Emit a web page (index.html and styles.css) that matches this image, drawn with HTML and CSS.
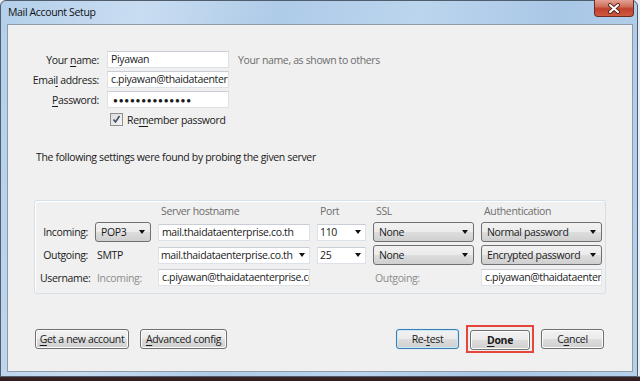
FILE: index.html
```html
<!DOCTYPE html>
<html>
  <head>
    <link rel="stylesheet" href="styles.css">
  </head>
  <body>
    <div class="window">
      <div class="titlebar">
        <span class="title">Mail Account Setup</span>
        <div class="close-btn">
          <svg width="14" height="11" viewBox="0 0 14 11">
            <path d="M3 2 L11 9 M11 2 L3 9" stroke="#5a2a22" stroke-width="4" stroke-linecap="round"/>
            <path d="M3 2 L11 9 M11 2 L3 9" stroke="#fff" stroke-width="2" stroke-linecap="round"/>
          </svg>
        </div>
      </div>

      <div class="panel">
        <div class="identity">
          <span class="lbl">Your <u>n</u>ame:</span>
          <div class="field">Piyawan</div>
          <span class="hint">Your name, as shown to others</span>

          <span class="lbl">Emai<u>l</u> address:</span>
          <div class="field">c.piyawan@thaidataenterprise.co.th</div>
          <span></span>

          <span class="lbl"><u>P</u>assword:</span>
          <div class="field dots">&#9679;&#9679;&#9679;&#9679;&#9679;&#9679;&#9679;&#9679;&#9679;&#9679;&#9679;&#9679;&#9679;&#9679;</div>
          <span></span>

          <span></span>
          <div class="remember">
            <span class="checkbox">
              <svg width="9" height="9" viewBox="0 0 9 9">
                <path d="M1.5 4.5 L3.5 7 L7.5 1" fill="none" stroke="#3c4f6b" stroke-width="1.6"/>
              </svg>
            </span>
            <span>Re<u>m</u>ember password</span>
          </div>
          <span></span>
        </div>

        <p class="found">The following settings were found by probing the given server</p>

        <div class="group">
          <span></span>
          <span></span>
          <span class="head">Server hostname</span>
          <span class="head">Port</span>
          <span class="head">SSL</span>
          <span class="head">Authentication</span>

          <span class="lbl">Incoming:</span>
          <div class="dropdown">POP3<i class="arrow"></i></div>
          <div class="field">mail.thaidataenterprise.co.th</div>
          <div class="field combo">110<i class="arrow"></i></div>
          <div class="dropdown">None<i class="arrow"></i></div>
          <div class="dropdown">Normal password<i class="arrow"></i></div>

          <span class="lbl">Outgoing:</span>
          <span class="plain">SMTP</span>
          <div class="field combo">mail.thaidataenterprise.co.th<i class="arrow"></i></div>
          <div class="field combo">25<i class="arrow"></i></div>
          <div class="dropdown">None<i class="arrow"></i></div>
          <div class="dropdown">Encrypted password<i class="arrow"></i></div>

          <span class="lbl">Username:</span>
          <span class="plain muted">Incoming:</span>
          <div class="field">c.piyawan@thaidataenterprise.co.th</div>
          <span></span>
          <span class="plain muted">Outgoing:</span>
          <div class="field">c.piyawan@thaidataenterprise.co.th</div>
        </div>

        <div class="actions">
          <div class="btn-row">
            <button class="btn wide"><u>G</u>et a new account</button>
            <button class="btn mid"><u>A</u>dvanced config</button>
          </div>
          <div class="btn-row tight">
            <button class="btn focus">Re-<u>t</u>est</button>
            <span class="marker"><button class="btn bold"><u>D</u>one</button></span>
            <button class="btn">C<u>a</u>ncel</button>
          </div>
        </div>
      </div>
    </div>
  </body>
</html>
```

FILE: styles.css
```css
* {
  box-sizing: border-box;
}
body {
  margin: 0;
  width: 640px;
  height: 381px;
  overflow: hidden;
  background: linear-gradient(to bottom, #e8eef4 0, #e8eef4 376px, #3b2326 377px, #2e1c1f 381px);
  font-family: "Open Sans", "Noto Sans", sans-serif;
  font-size: 10.5px;
  letter-spacing: -0.35px;
  color: #1a1a1a;
}
u {
  text-decoration-thickness: 1px;
  text-underline-offset: 2px;
}

.window {
  width: 638px;
  height: 377px;
  border: 1px solid #4f5d6c;
  border-radius: 6px 6px 0 0;
  background: linear-gradient(100deg, #b3cfea 0%, #c9ddf1 20%, #aecbe8 40%, #bcd5ee 60%, #a9c7e6 80%, #b7d1ec 100%);
  display: flex;
  flex-direction: column;
}

.titlebar {
  height: 23px;
  display: flex;
  align-items: flex-start;
  justify-content: space-between;
  padding-left: 7px;
}
.title {
  font-size: 10.5px;
  line-height: 22px;
  color: #111;
}
.close-btn {
  width: 40px;
  height: 17px;
  margin-top: -1px;
  margin-right: 3px;
  border: 1px solid #6e2b22;
  border-top: none;
  border-radius: 0 0 4px 4px;
  background: linear-gradient(to bottom, #e4a193 0%, #d0705e 40%, #c0402c 55%, #cf5a3f 100%);
  display: flex;
  align-items: center;
  justify-content: center;
}

.panel {
  margin: 0 4px 0 6px;
  height: 348px;
  background: #f0f0f0;
  border: 1px solid #8e9aa8;
  padding-top: 26px;
}

.identity {
  display: grid;
  grid-template-columns: 91px 122px 1fr;
  grid-auto-rows: 17px;
  column-gap: 8px;
  row-gap: 3px;
  align-items: center;
}
.identity .hint {
  padding-left: 1px;
  color: #6d6d6d;
}
.lbl {
  text-align: right;
  white-space: nowrap;
}

.field {
  height: 17px;
  background: #fff;
  border: 1px solid #dde2e8;
  border-top-color: #c9ced6;
  padding: 0 3px;
  line-height: 15px;
  white-space: nowrap;
  overflow: hidden;
  position: relative;
}
.field.dots {
  font-size: 8px;
  letter-spacing: 0.8px;
  padding-left: 5px;
}

.remember {
  display: flex;
  align-items: center;
  gap: 4px;
  padding-left: 3px;
  white-space: nowrap;
}
.checkbox {
  width: 13px;
  height: 13px;
  border: 1px solid #8f8f8f;
  background: linear-gradient(135deg, #dcdcdc, #f6f6f6);
  display: flex;
  align-items: center;
  justify-content: center;
}

.found {
  margin: 21px 0 0 28px;
  line-height: 16px;
}

.group {
  margin: 35px 0 0 26px;
  width: 572px;
  border: 1px solid #d5dfe5;
  border-radius: 3px;
  box-shadow: inset 1px 1px 0 #fff;
  padding: 2px 3px 6px 5px;
  display: grid;
  grid-template-columns: 48px 56px 152px 49px 101px 121px;
  grid-template-rows: 16px 20px 20px 19px;
  column-gap: 7px;
  row-gap: 3px;
  align-items: center;
}
.group .head {
  color: #6d6d6d;
  padding-left: 3px;
}
.group .plain {
  padding-left: 2px;
}
.group .muted {
  color: #8c8c8c;
}

.dropdown {
  height: 20px;
  border: 1px solid #707070;
  border-radius: 3px;
  background: linear-gradient(to bottom, #f2f2f2 0%, #ebebeb 48%, #dddddd 52%, #cfcfcf 100%);
  padding-left: 5px;
  line-height: 18px;
  position: relative;
  white-space: nowrap;
}
.field.combo {
  padding-left: 2px;
}
.arrow {
  position: absolute;
  right: 5px;
  top: 50%;
  margin-top: -2px;
  border-left: 3.5px solid transparent;
  border-right: 3.5px solid transparent;
  border-top: 4px solid #111;
}
.field .arrow {
  right: 4px;
}
.field .arrow::before {
  content: "";
  position: absolute;
  left: -9px;
  top: -10px;
  width: 16px;
  height: 17px;
  background: #fff;
  z-index: -1;
}

.actions {
  display: flex;
  justify-content: space-between;
  align-items: center;
  margin-top: 31px;
  padding: 0 28px 0 27px;
}
.btn-row {
  display: flex;
  gap: 11px;
  align-items: center;
}
.btn-row.tight {
  gap: 7px;
}
.btn {
  height: 20px;
  width: 63px;
  border: 1px solid #707070;
  border-radius: 3px;
  background: linear-gradient(to bottom, #f2f2f2 0%, #ebebeb 48%, #dddddd 52%, #cfcfcf 100%);
  font-family: inherit;
  font-size: 10.5px;
  letter-spacing: -0.35px;
  color: #1a1a1a;
  padding: 0;
  white-space: nowrap;
  box-shadow: inset 0 0 0 1px #fcfcfc;
}
.btn.wide {
  width: 94px;
}
.btn.mid {
  width: 87px;
}
.btn.focus {
  border-color: #3c7fb1;
  box-shadow: inset 0 0 0 1px #c6e8f8, 0 0 1px #8cc6ea;
}
.btn.bold {
  font-weight: bold;
  width: 60px;
}
.marker {
  display: block;
  border: 2px solid #e5463c;
  padding: 3px 2px 1px 2px;
}
```
